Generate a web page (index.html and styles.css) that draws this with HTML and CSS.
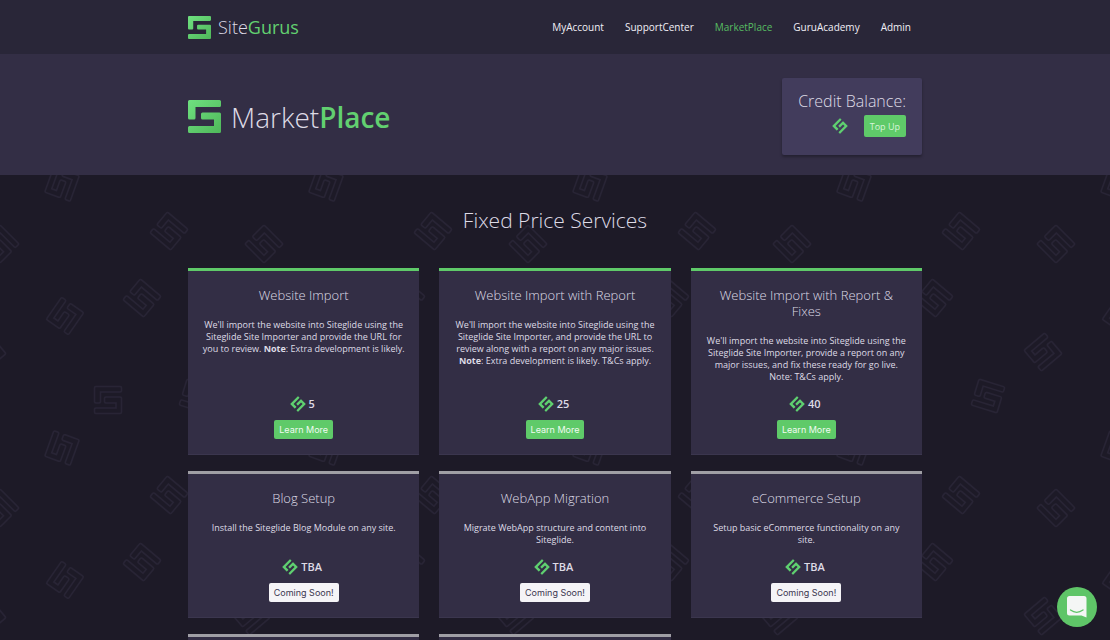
FILE: index.html
```html
<!DOCTYPE html>
<html lang="en">
<head>
<meta charset="utf-8">
<title>SiteGurus MarketPlace</title>
<meta name="viewport" content="width=device-width, initial-scale=1">
<link rel="stylesheet" href="styles.css">
</head>
<body>
<svg class="defs" width="0" height="0" aria-hidden="true">
  <defs>
    <linearGradient id="brand" x1="0" y1="0" x2="1" y2="1">
      <stop offset="0" stop-color="#6fe080"/>
      <stop offset="1" stop-color="#4fb85a"/>
    </linearGradient>
    <path id="mark" d="M1.500 0H31.500Q33 0 33 1.500V5.500Q33 7 31.500 7H7.500V18Q7.500 19.500 6 19.500H1.500Q0 19.500 0 18V1.500Q0 0 1.500 0ZM14.500 12.500H31.500Q33 12.500 33 14V31.500Q33 33 31.500 33H1.500Q0 33 0 31.500V27.500Q0 26 1.500 26H26V19.500H14.500Q13 19.500 13 18V14Q13 12.500 14.500 12.500Z"/>
    <symbol id="logo" viewBox="0 0 33 33">
      <use href="#mark" fill="url(#brand)"/>
    </symbol>
    <symbol id="coin" viewBox="0 0 16 16">
      <use href="#mark" fill="#5fd070" transform="translate(8 8) rotate(-45) scale(.34) translate(-16.500 -16.500)"/>
    </symbol>
  </defs>
</svg>

<header class="topbar">
  <div class="container topbar-inner">
    <a class="brand" href="#"><svg class="brand-mark"><use href="#logo"/></svg><span>Site<b>Gurus</b></span></a>
    <nav class="nav">
      <a href="#">MyAccount</a>
      <a href="#">SupportCenter</a>
      <a href="#" class="active">MarketPlace</a>
      <a href="#">GuruAcademy</a>
      <a href="#">Admin</a>
    </nav>
  </div>
</header>

<section class="hero">
  <div class="container hero-inner">
    <h1 class="hero-title"><svg class="hero-mark"><use href="#logo"/></svg><span>Market<b>Place</b></span></h1>
    <div class="balance">
      <div class="balance-label">Credit Balance:</div>
      <div class="balance-row"><svg class="coin"><use href="#coin"/></svg><button class="topup" type="button">Top Up</button></div>
    </div>
  </div>
</section>

<main class="services">
  <svg class="pattern" aria-hidden="true">
    <defs>
      <g id="outline">
        <path d="M-12-13.500H12Q13.500-13.500 13.500-12V-9.500Q13.500-8 12-8H-7.500V1.500Q-7.500 3-9 3H-12Q-13.500 3-13.500 1.500V-12Q-13.500-13.500-12-13.500Z"/>
        <path d="M-2-3H12Q13.500-3 13.500-1.500V12Q13.500 13.500 12 13.500H-12Q-13.500 13.500-13.500 12V9.500Q-13.500 8-12 8H8V3H-2Q-3.500 3-3.500 1.500V-1.500Q-3.500-3-2-3Z"/>
      </g>
      <pattern id="tile" width="264" height="264" patternUnits="userSpaceOnUse">
        <g fill="none" stroke="#282435" stroke-width="1.500">
          <use href="#outline" transform="translate(62 9) rotate(110)"/>
          <use href="#outline" transform="translate(62 273) rotate(110)"/>
          <use href="#outline" transform="translate(169 56) rotate(40)"/>
          <use href="#outline" transform="translate(142 123) rotate(40)"/>
          <use href="#outline" transform="translate(65 141) rotate(125)"/>
          <use href="#outline" transform="translate(108 225)"/>
          <use href="#outline" transform="translate(196 221) rotate(17)"/>
          <use href="#outline" transform="translate(0 69) rotate(45)"/>
          <use href="#outline" transform="translate(264 69) rotate(45)"/>
          <use href="#outline" transform="translate(251 177) rotate(140)"/>
          <use href="#outline" transform="translate(-13 177) rotate(140)"/>
        </g>
      </pattern>
    </defs>
    <rect width="100%" height="100%" fill="url(#tile)"/>
  </svg>
  <div class="container">
    <h2 class="section-title">Fixed Price Services</h2>
    <div class="grid">
      <article class="card live">
        <h3>Website Import</h3>
        <p>We'll import the website into Siteglide using the Siteglide Site Importer and provide the URL for you to review. <b>Note</b>: Extra development is likely.</p>
        <div class="price"><svg class="coin"><use href="#coin"/></svg>5</div>
        <button class="btn" type="button">Learn More</button>
      </article>
      <article class="card live">
        <h3>Website Import with Report</h3>
        <p>We'll import the website into Siteglide using the Siteglide Site Importer, and provide the URL to review along with a report on any major issues. <b>Note</b>: Extra development is likely. T&amp;Cs apply.</p>
        <div class="price"><svg class="coin"><use href="#coin"/></svg>25</div>
        <button class="btn" type="button">Learn More</button>
      </article>
      <article class="card live">
        <h3>Website Import with Report &amp; Fixes</h3>
        <p>We'll import the website into Siteglide using the Siteglide Site Importer, provide a report on any major issues, and fix these ready for go live. Note: T&amp;Cs apply.</p>
        <div class="price"><svg class="coin"><use href="#coin"/></svg>40</div>
        <button class="btn" type="button">Learn More</button>
      </article>
      <article class="card">
        <h3>Blog Setup</h3>
        <p>Install the Siteglide Blog Module on any site.</p>
        <div class="price"><svg class="coin"><use href="#coin"/></svg>TBA</div>
        <button class="btn soon" type="button">Coming Soon!</button>
      </article>
      <article class="card">
        <h3>WebApp Migration</h3>
        <p>Migrate WebApp structure and content into Siteglide.</p>
        <div class="price"><svg class="coin"><use href="#coin"/></svg>TBA</div>
        <button class="btn soon" type="button">Coming Soon!</button>
      </article>
      <article class="card">
        <h3>eCommerce Setup</h3>
        <p>Setup basic eCommerce functionality on any site.</p>
        <div class="price"><svg class="coin"><use href="#coin"/></svg>TBA</div>
        <button class="btn soon" type="button">Coming Soon!</button>
      </article>
      <article class="card"></article>
      <article class="card"></article>
    </div>
  </div>
</main>

<button class="chat" type="button" aria-label="Open chat">
  <svg width="20" height="22" viewBox="0 0 20 22">
    <path fill="#f4f6f5" d="M2.500 0H17Q19.500 0 19.500 2.500V21.500L14.500 19.500H2.500Q0 19.500 0 17V2.500Q0 0 2.500 0Z"/>
    <path fill="none" stroke="#5fc568" stroke-width="1.300" stroke-linecap="round" d="M3.500 14Q9.700 18.600 16 14"/>
  </svg>
</button>
</body>
</html>
```

FILE: styles.css
```css
* { box-sizing: border-box; }

body {
  margin: 0;
  height: 100vh;
  overflow: hidden;
  background: #1d1a27;
  color: #dedbe6;
  font-family: "Open Sans", "Noto Sans", sans-serif;
  font-weight: 300;
}

a { color: inherit; text-decoration: none; }
button { border: 0; font-family: Inter, sans-serif; cursor: pointer; }
h1, h2, h3, p { margin: 0; font-weight: 300; }
.defs { position: absolute; }

.container {
  width: 100%;
  max-width: 766px;
  margin: 0 auto;
  padding: 0 16px;
}

.topbar { background: #292638; }
.topbar-inner {
  display: flex;
  align-items: center;
  justify-content: space-between;
  height: 54px;
}
.brand {
  display: flex;
  align-items: center;
  gap: 7px;
  font-size: 18px;
  line-height: 24px;
}
.brand b, .hero-title b { color: #62d070; font-weight: 400; }
.brand-mark { width: 23px; height: 23px; }
.nav {
  display: flex;
  gap: 21px;
  padding-right: 11px;
  color: #f1eff6;
  font-size: 10px;
  line-height: 16px;
  font-weight: 400;
}
.nav .active { color: #57bd62; }

.hero { background: #332e45; }
.hero-inner {
  display: flex;
  align-items: center;
  justify-content: space-between;
  height: 121px;
  padding-top: 4px;
}
.hero-title {
  display: flex;
  align-items: center;
  gap: 10px;
  font-size: 28px;
  line-height: 40px;
}
.hero-title b { font-weight: 600; }
.hero-mark { width: 33px; height: 33px; }

.balance {
  height: 77px;
  padding: 12px 16px;
  border-radius: 2px;
  background: #423c5c;
  box-shadow: 0 2px 3px rgba(0, 0, 0, 0.3);
  text-align: right;
}
.balance-label { font-size: 16px; line-height: 22px; }
.balance-row {
  display: flex;
  align-items: center;
  justify-content: flex-end;
  gap: 16px;
  padding-top: 3px;
}
.coin { width: 16px; height: 16px; }
.topup {
  height: 22px;
  padding: 0 6px;
  border-radius: 2px;
  background: #5fca69;
  color: #d8f5db;
  font: 400 9px "Open Sans", sans-serif;
}

.services { position: relative; min-height: 465px; }
.pattern { position: absolute; inset: 0; width: 100%; height: 100%; }
.services .container { position: relative; }
.section-title {
  padding: 30px 0 33px;
  font-size: 21px;
  line-height: 30px;
  text-align: center;
}
.grid {
  display: grid;
  grid-template-columns: repeat(3, 1fr);
  gap: 16px 20px;
}
.card {
  display: flex;
  flex-direction: column;
  align-items: center;
  min-height: 147px;
  padding: 16px 13px 15px;
  border-top: 3px solid #a09fa5;
  border-bottom: 1px solid #3b364e;
  background: #332e45;
  text-align: center;
}
.card.live { min-height: 187px; border-top-color: #5fca69; }
.card h3 { padding: 0 8px; font-size: 13px; line-height: 16px; }
.card p { padding: 16px 0 8px; font-size: 9px; line-height: 12px; font-weight: 400; }
.card b { font-weight: 700; }
.price {
  display: flex;
  align-items: center;
  gap: 3px;
  margin-top: auto;
  padding-right: 3px;
  font-size: 11px;
  line-height: 16px;
  font-weight: 600;
}
.btn {
  height: 19px;
  margin-top: 8px;
  padding: 0 5px;
  border-radius: 2px;
  background: #5fca69;
  color: #f0fbf1;
  font-size: 9px;
}
.soon { background: #f5f4f7; color: #3b3650; }

.chat {
  position: fixed;
  right: 13px;
  bottom: 13px;
  display: flex;
  align-items: center;
  justify-content: center;
  width: 40px;
  height: 40px;
  padding: 0;
  border-radius: 50%;
  background: #5fc568;
}
```
